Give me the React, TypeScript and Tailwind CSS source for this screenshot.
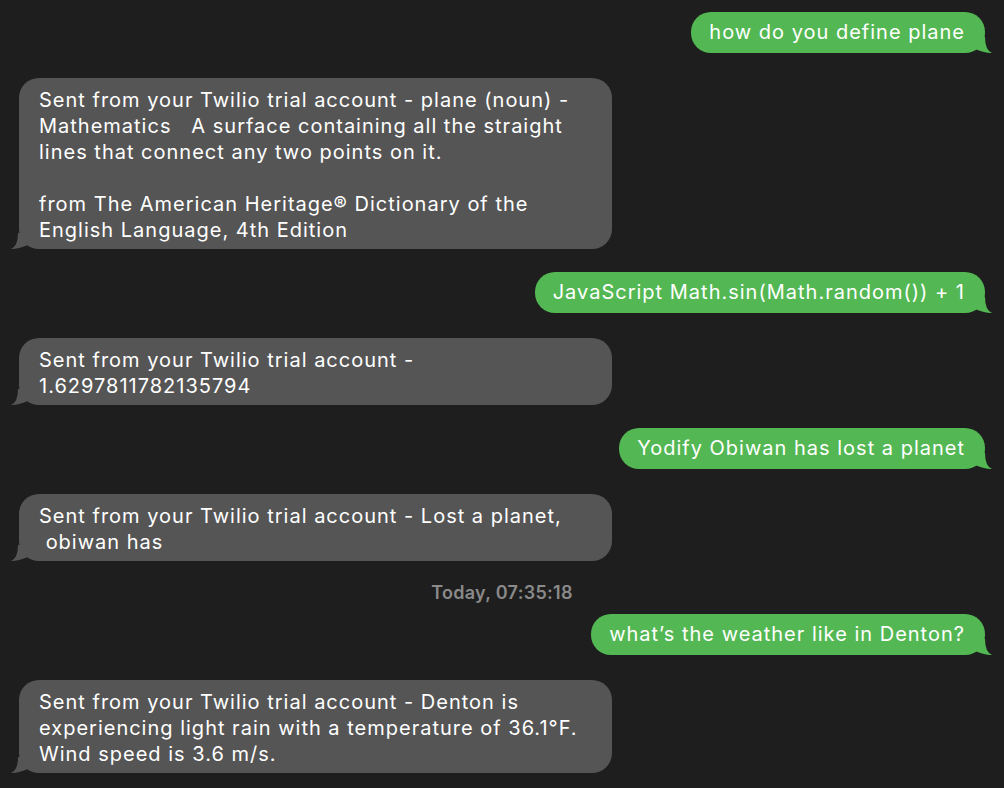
import React from 'react'

type Msg =
  | { kind: 'out'; text: string; mt: string }
  | { kind: 'in'; text: string; mt: string }
  | { kind: 'time'; text: string; mt: string }

const messages: Msg[] = [
  { kind: 'out', text: 'how do you define plane', mt: 'mt-[12px]' },
  {
    kind: 'in',
    text:
      'Sent from your Twilio trial account - plane (noun) -\nMathematics   A surface containing all the straight\nlines that connect any two points on it.\n\nfrom The American Heritage® Dictionary of the\nEnglish Language, 4th Edition',
    mt: 'mt-[25px]',
  },
  { kind: 'out', text: 'JavaScript Math.sin(Math.random()) + 1', mt: 'mt-[23px]' },
  { kind: 'in', text: 'Sent from your Twilio trial account -\n1.6297811782135794', mt: 'mt-[25px]' },
  { kind: 'out', text: 'Yodify Obiwan has lost a planet', mt: 'mt-[23px]' },
  { kind: 'in', text: 'Sent from your Twilio trial account - Lost a planet,\n obiwan has', mt: 'mt-[25px]' },
  { kind: 'time', text: 'Today, 07:35:18', mt: 'mt-[21px]' },
  { kind: 'out', text: 'what\u2019s the weather like in Denton?', mt: 'mt-[10px]' },
  {
    kind: 'in',
    text:
      'Sent from your Twilio trial account - Denton is\nexperiencing light rain with a temperature of 36.1°F.\nWind speed is 3.6 m/s.',
    mt: 'mt-[25px]',
  },
]

// bubble tail, drawn for the right side; mirrored for incoming
function Tail({ color, left }: { color: string; left?: boolean }) {
  return (
    <svg
      width="20"
      height="19"
      viewBox="0 0 20 19"
      className={
        left
          ? 'absolute left-[-9px] bottom-[-1px] -scale-x-100'
          : 'absolute right-[-8px] bottom-[-1px]'
      }
    >
      <path d="M12 2 Q12 15 19 18 Q13 18.5 2 14 L2 2 Z" fill={color} />
    </svg>
  )
}

export default function App() {
  return (
    <div
      className="w-[1004px] h-[788px] overflow-hidden bg-[#1e1e1e] flex flex-col text-white"
      style={{ fontFamily: 'Inter, "Noto Sans", sans-serif' }}
    >
      {messages.map((m, i) => {
        if (m.kind === 'time') {
          return (
            <div
              key={i}
              className={`${m.mt} text-center text-[18px] leading-[22px] tracking-[0.3px] font-semibold text-[#8a8a8a]`}
            >
              {m.text}
            </div>
          )
        }
        if (m.kind === 'out') {
          return (
            <div key={i} className={`${m.mt} self-end mr-[19px] relative`}>
              <div className="relative z-10 bg-[#53b853] rounded-[20px] pl-[18px] pr-[20px] py-[7px] text-[20px] leading-[27px] tracking-[1px] whitespace-pre">
                {m.text}
              </div>
              <Tail color="#53b853" />
            </div>
          )
        }
        return (
          <div key={i} className={`${m.mt} self-start ml-[19px] relative`}>
            <div className="relative z-10 w-[593px] bg-[#555555] rounded-[20px] pl-[20px] pr-[16px] pt-[9px] pb-[6px] text-[20px] leading-[26px] tracking-[1px] whitespace-pre-wrap">
              {m.text}
            </div>
            <Tail color="#555555" left />
          </div>
        )
      })}
    </div>
  )
}
